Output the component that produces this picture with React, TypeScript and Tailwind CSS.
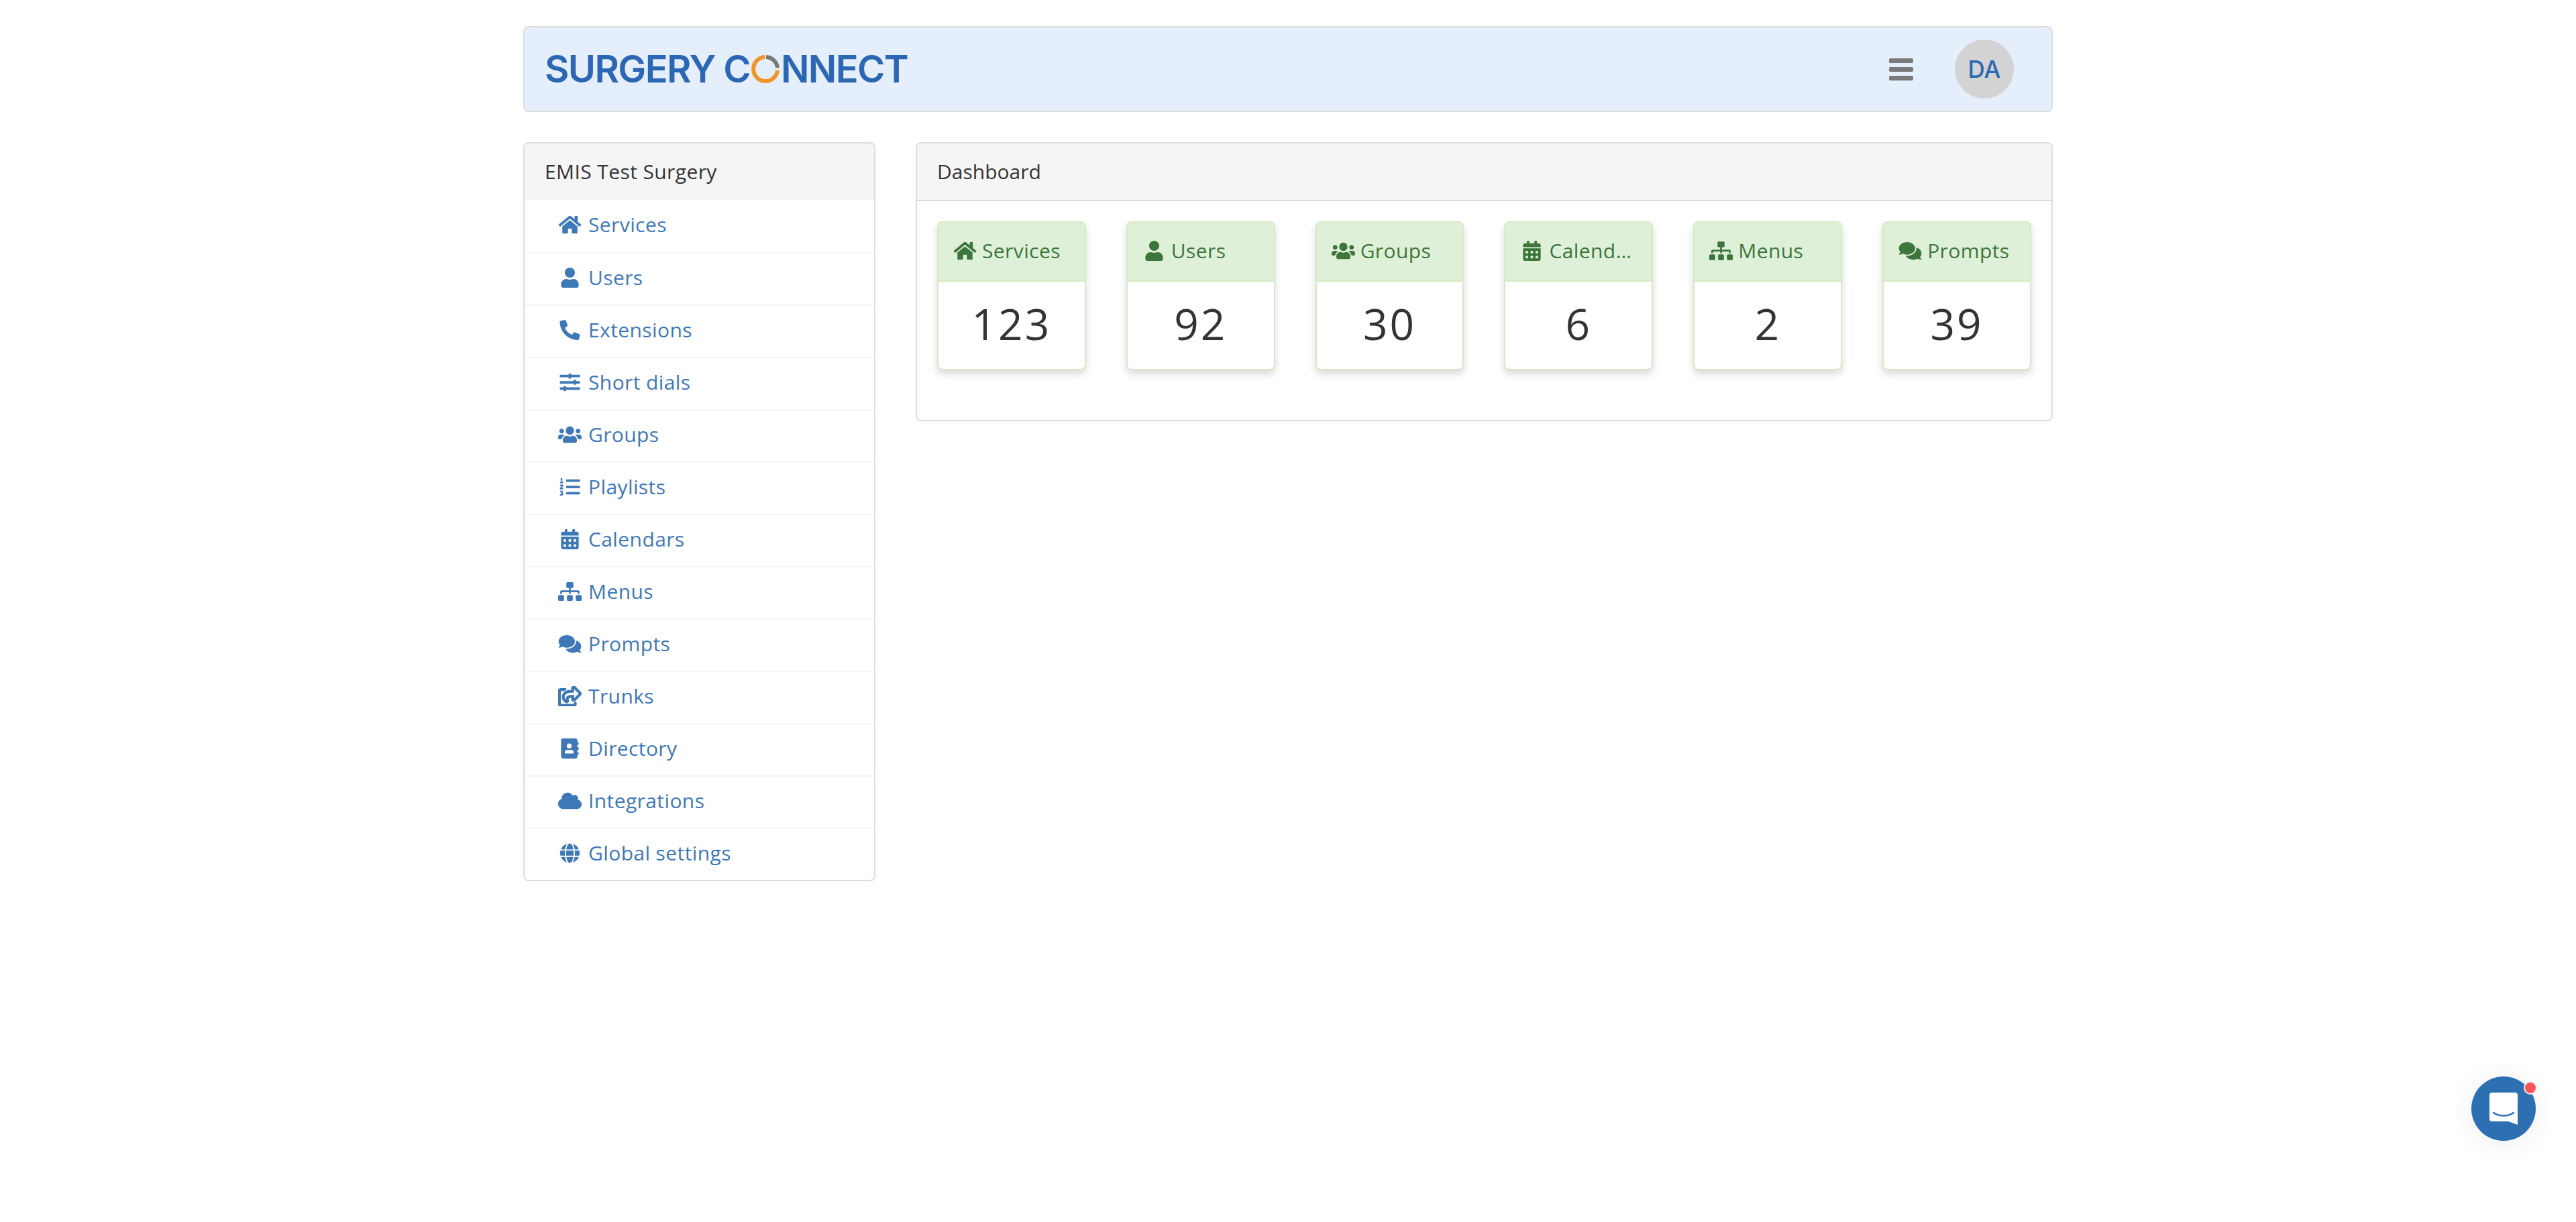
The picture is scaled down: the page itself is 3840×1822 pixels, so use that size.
import {
  FaAddressBook,
  FaCalendarAlt,
  FaCloud,
  FaComments,
  FaGlobe,
  FaHome,
  FaListOl,
  FaPhoneAlt,
  FaRegShareSquare,
  FaSitemap,
  FaSlidersH,
  FaUser,
  FaUsers,
} from 'react-icons/fa'

const navItems = [
  { label: 'Services', Icon: FaHome },
  { label: 'Users', Icon: FaUser },
  { label: 'Extensions', Icon: FaPhoneAlt },
  { label: 'Short dials', Icon: FaSlidersH },
  { label: 'Groups', Icon: FaUsers },
  { label: 'Playlists', Icon: FaListOl },
  { label: 'Calendars', Icon: FaCalendarAlt },
  { label: 'Menus', Icon: FaSitemap },
  { label: 'Prompts', Icon: FaComments },
  { label: 'Trunks', Icon: FaRegShareSquare },
  { label: 'Directory', Icon: FaAddressBook },
  { label: 'Integrations', Icon: FaCloud },
  { label: 'Global settings', Icon: FaGlobe },
]

const stats = [
  { label: 'Services', value: 123, Icon: FaHome },
  { label: 'Users', value: 92, Icon: FaUser },
  { label: 'Groups', value: 30, Icon: FaUsers },
  { label: 'Calendars', value: 6, Icon: FaCalendarAlt },
  { label: 'Menus', value: 2, Icon: FaSitemap },
  { label: 'Prompts', value: 39, Icon: FaComments },
]

function Logo() {
  return (
    <div className="flex items-center font-['Inter',sans-serif] text-[56px] leading-none font-semibold tracking-[-1.6px] text-[#2b67b2]">
      <span>SURGERY C</span>
      <svg viewBox="0 0 44 44" className="mx-[1px] h-[44px] w-[44px]" fill="none">
        <path d="M21 4 A18 18 0 1 0 40 24" stroke="#ee9526" strokeWidth="6" />
        <path d="M23 4 A18 18 0 0 1 40 20" stroke="#777777" strokeWidth="6" />
      </svg>
      <span>NNECT</span>
    </div>
  )
}

function StatCard({ label, value, Icon }: (typeof stats)[number]) {
  return (
    <div className="overflow-hidden rounded-[8px] border-2 border-[#d6e9c6] bg-white shadow-[0_6px_12px_rgba(0,0,0,0.15)]">
      <div className="h-[86px] truncate bg-[#dff0d8] px-[22px] text-left text-[30px] leading-[84px] tracking-[0.4px] text-[#3c763d]">
        <Icon className="mr-[8px] inline-block h-[30px] w-[35px] align-[-4px]" />
        {label}
      </div>
      <div className="h-[132px] border-t-2 border-[#d6e9c6] text-center text-[64px] leading-[125px] tracking-[3px] text-[#333333]">
        {value}
      </div>
    </div>
  )
}

export default function App() {
  return (
    <div className="relative min-h-[1822px] bg-white font-['Open_Sans',sans-serif]">
      <div className="mx-auto flex w-[2280px] flex-col pt-[39px]">
        <header className="flex h-[128px] items-center rounded-[8px] border-2 border-[#dddddd] bg-[#e5eefb] pr-[56px] pl-[30px]">
          <Logo />
          <div className="ml-auto flex items-center gap-[62px]">
            <div className="flex w-[36px] flex-col gap-[6px]">
              <span className="h-[7px] rounded-[2px] bg-[#7a7a7a]" />
              <span className="h-[7px] rounded-[2px] bg-[#7a7a7a]" />
              <span className="h-[7px] rounded-[2px] bg-[#7a7a7a]" />
            </div>
            <div className="flex h-[88px] w-[88px] items-center justify-center rounded-full bg-[#d3d3d3] font-['Inter',sans-serif] text-[35px] font-medium text-[#2b67b2]">
              DA
            </div>
          </div>
        </header>

        <div className="mt-[45px] flex items-start gap-[60px]">
          <aside className="w-[525px] shrink-0 overflow-hidden rounded-[8px] border-2 border-[#dddddd] bg-white">
            <div className="flex h-[84px] items-center bg-[#f5f5f5] px-[30px] pb-[2px] text-[30px] tracking-[0.4px] text-[#333333]">
              EMIS Test Surgery
            </div>
            {navItems.map(({ label, Icon }, i) => (
              <div
                key={label}
                className={`flex h-[78px] items-center pb-[5px] pl-[50px] text-[30px] tracking-[0.4px] text-[#3f78b7] ${i > 0 ? 'border-t-2 border-[#f5f5f5]' : ''}`}
              >
                <Icon
                  className="mr-[10px] h-[30px] w-[35px]"
                  stroke={label === 'Trunks' ? 'currentColor' : undefined}
                  strokeWidth={label === 'Trunks' ? 24 : undefined}
                />
                {label}
              </div>
            ))}
          </aside>

          <main className="h-[416px] flex-1 overflow-hidden rounded-[8px] border-2 border-[#dddddd] bg-white">
            <div className="flex h-[86px] items-center border-b-2 border-[#dddddd] bg-[#f5f5f5] px-[30px] pb-[2px] text-[30px] text-[#333333]">
              Dashboard
            </div>
            <div className="grid grid-cols-6 gap-[60px] px-[30px] pt-[30px]">
              {stats.map((s) => (
                <StatCard key={s.label} {...s} />
              ))}
            </div>
          </main>
        </div>
      </div>

      <div className="fixed right-[60px] bottom-[121px] flex h-[96px] w-[96px] items-center justify-center rounded-full bg-[#2c70b1] shadow-[0_4px_40px_rgba(0,0,0,0.08)]">
        <svg viewBox="0 0 42 48" className="h-[48px] w-[42px]">
          <path
            d="M4 0H38a4 4 0 0 1 4 4V48L28 43H4a4 4 0 0 1-4-4V4a4 4 0 0 1 4-4Z"
            fill="#ffffff"
          />
          <path d="M6 30C14 36 28 36 36 30" fill="none" stroke="#2c70b1" strokeWidth="2.5" strokeLinecap="round" />
        </svg>
        <span className="absolute top-[7px] right-[-2px] h-[20px] w-[20px] rounded-full border-2 border-[#eeeeee] bg-[#f95656]" />
      </div>
    </div>
  )
}
